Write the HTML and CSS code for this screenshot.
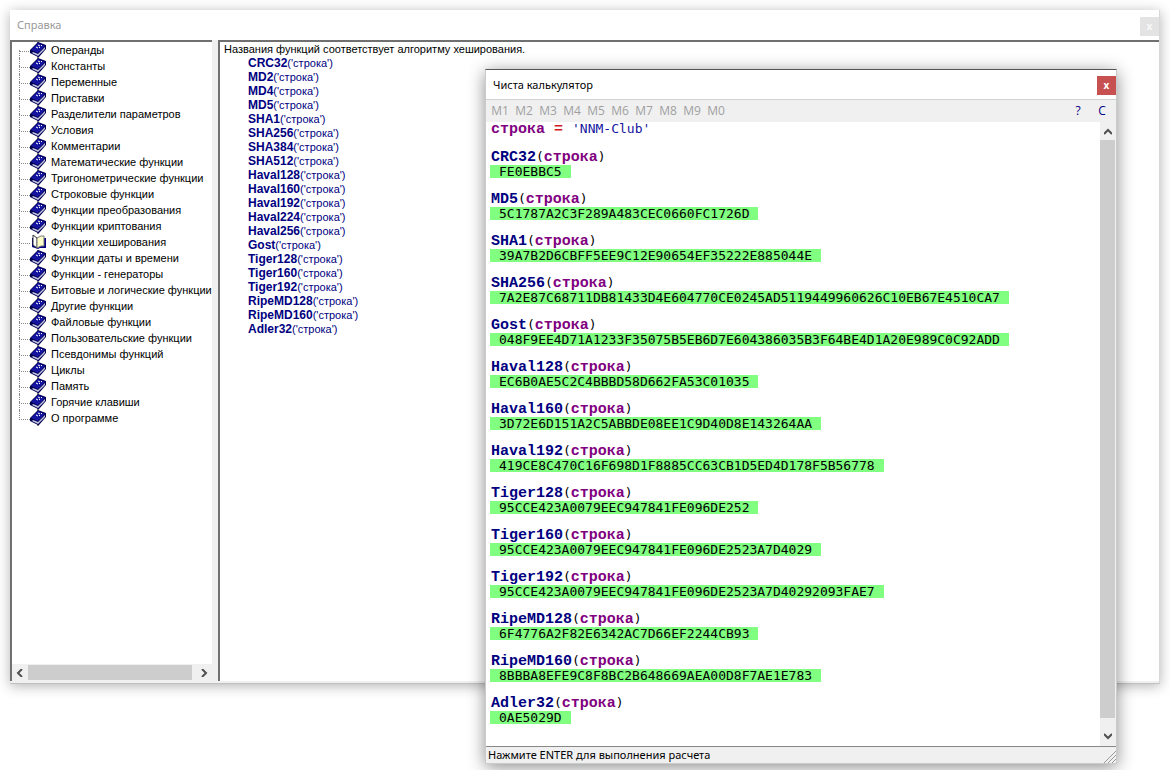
FILE: index.html
```
<!DOCTYPE html>
<html lang="ru">
<head>
    <meta charset="UTF-8">
    <meta name="viewport" content="width=device-width, initial-scale=1.0">
    <title>Чиста калькулятор</title>
    <link rel="stylesheet" href="styles.css">
</head>
<body>

    <svg class="sprites" aria-hidden="true">
        <symbol id="book" viewBox="0 0 16 16">
            <path d="M8 0v2M8 13v3" stroke="#000" />
            <path d="M0 8l8-8 8 3v4l-7 8h-1l-8-4z" fill="#000050" />
            <path d="M1 8l7-7 7 3-7 7z" fill="#1414a0" />
            <path d="M8 12l7-7v2l-7 7-6-3 1-1z" fill="#c4c4e4" />
            <path d="M6 5l2 1M8 3l2 1M9 5l1 1M11 3l1 1" stroke="#fff" fill="none" />
        </symbol>
        <symbol id="book-open" viewBox="0 0 16 16">
            <path d="M0 4h2v9l6 2 2-1h6V4h-2" fill="#000080" />
            <path d="M3 1l4 3v10l-4-3z" fill="#fff" stroke="#333" />
            <path d="M7 4l4-2h3v10h-3l-4 2z" fill="#ffffc8" stroke="#777" />
        </symbol>
    </svg>

    <div class="desktop">
        <section class="window help-window">
            <header class="titlebar">
                <h2>Справка</h2>
                <button class="close-btn" aria-label="Закрыть справку">x</button>
            </header>
            <div class="help-body">
                <nav class="tree-pane">
                    <ul class="tree">
                        <li><a href="#"><svg><use href="#book" /></svg>Операнды</a></li>
                        <li><a href="#"><svg><use href="#book" /></svg>Константы</a></li>
                        <li><a href="#"><svg><use href="#book" /></svg>Переменные</a></li>
                        <li><a href="#"><svg><use href="#book" /></svg>Приставки</a></li>
                        <li><a href="#"><svg><use href="#book" /></svg>Разделители параметров</a></li>
                        <li><a href="#"><svg><use href="#book" /></svg>Условия</a></li>
                        <li><a href="#"><svg><use href="#book" /></svg>Комментарии</a></li>
                        <li><a href="#"><svg><use href="#book" /></svg>Математические функции</a></li>
                        <li><a href="#"><svg><use href="#book" /></svg>Тригонометрические функции</a></li>
                        <li><a href="#"><svg><use href="#book" /></svg>Строковые функции</a></li>
                        <li><a href="#"><svg><use href="#book" /></svg>Функции преобразования</a></li>
                        <li><a href="#"><svg><use href="#book" /></svg>Функции криптования</a></li>
                        <li><a href="#"><svg><use href="#book-open" /></svg>Функции хеширования</a></li>
                        <li><a href="#"><svg><use href="#book" /></svg>Функции даты и времени</a></li>
                        <li><a href="#"><svg><use href="#book" /></svg>Функции - генераторы</a></li>
                        <li><a href="#"><svg><use href="#book" /></svg>Битовые и логические функции</a></li>
                        <li><a href="#"><svg><use href="#book" /></svg>Другие функции</a></li>
                        <li><a href="#"><svg><use href="#book" /></svg>Файловые функции</a></li>
                        <li><a href="#"><svg><use href="#book" /></svg>Пользовательские функции</a></li>
                        <li><a href="#"><svg><use href="#book" /></svg>Псевдонимы функций</a></li>
                        <li><a href="#"><svg><use href="#book" /></svg>Циклы</a></li>
                        <li><a href="#"><svg><use href="#book" /></svg>Память</a></li>
                        <li><a href="#"><svg><use href="#book" /></svg>Горячие клавиши</a></li>
                        <li><a href="#"><svg><use href="#book" /></svg>О программе</a></li>
                    </ul>
                    <div class="hscroll">
                        <button aria-label="Влево"><svg viewBox="0 0 8 8"><path d="M6 0L2 4l4 4" /></svg></button>
                        <div class="hthumb"></div>
                        <button aria-label="Вправо"><svg viewBox="0 0 8 8"><path d="M2 0l4 4-4 4" /></svg></button>
                    </div>
                </nav>
                <article class="topic">
                    <p>Названия функций соответствует алгоритму хеширования.</p>
                    <ul>
                        <li><b>CRC32</b>('строка')</li>
                        <li><b>MD2</b>('строка')</li>
                        <li><b>MD4</b>('строка')</li>
                        <li><b>MD5</b>('строка')</li>
                        <li><b>SHA1</b>('строка')</li>
                        <li><b>SHA256</b>('строка')</li>
                        <li><b>SHA384</b>('строка')</li>
                        <li><b>SHA512</b>('строка')</li>
                        <li><b>Haval128</b>('строка')</li>
                        <li><b>Haval160</b>('строка')</li>
                        <li><b>Haval192</b>('строка')</li>
                        <li><b>Haval224</b>('строка')</li>
                        <li><b>Haval256</b>('строка')</li>
                        <li><b>Gost</b>('строка')</li>
                        <li><b>Tiger128</b>('строка')</li>
                        <li><b>Tiger160</b>('строка')</li>
                        <li><b>Tiger192</b>('строка')</li>
                        <li><b>RipeMD128</b>('строка')</li>
                        <li><b>RipeMD160</b>('строка')</li>
                        <li><b>Adler32</b>('строка')</li>
                    </ul>
                </article>
            </div>
        </section>

        <section class="window calc-window">
            <header class="titlebar">
                <h2>Чиста калькулятор</h2>
                <button class="close-btn" aria-label="Закрыть">x</button>
            </header>
            <div class="toolbar">
                <button disabled>M1</button>
                <button disabled>M2</button>
                <button disabled>M3</button>
                <button disabled>M4</button>
                <button disabled>M5</button>
                <button disabled>M6</button>
                <button disabled>M7</button>
                <button disabled>M8</button>
                <button disabled>M9</button>
                <button disabled>M0</button>
                <button class="tool-help">?</button>
                <button class="tool-clear">C</button>
            </div>
            <div class="calc-body">
                <div class="sheet">
                    <p class="expr"><var>строка</var><b class="op"> = </b><span class="str">'NNM-Club'</span></p>

                    <p class="expr"><b>CRC32</b>(<var>строка</var>)</p>
                    <p class="result"><span>FE0EBBC5</span></p>

                    <p class="expr"><b>MD5</b>(<var>строка</var>)</p>
                    <p class="result"><span>5C1787A2C3F289A483CEC0660FC1726D</span></p>

                    <p class="expr"><b>SHA1</b>(<var>строка</var>)</p>
                    <p class="result"><span>39A7B2D6CBFF5EE9C12E90654EF35222E885044E</span></p>

                    <p class="expr"><b>SHA256</b>(<var>строка</var>)</p>
                    <p class="result"><span>7A2E87C68711DB81433D4E604770CE0245AD5119449960626C10EB67E4510CA7</span></p>

                    <p class="expr"><b>Gost</b>(<var>строка</var>)</p>
                    <p class="result"><span>048F9EE4D71A1233F35075B5EB6D7E604386035B3F64BE4D1A20E989C0C92ADD</span></p>

                    <p class="expr"><b>Haval128</b>(<var>строка</var>)</p>
                    <p class="result"><span>EC6B0AE5C2C4BBBD58D662FA53C01035</span></p>

                    <p class="expr"><b>Haval160</b>(<var>строка</var>)</p>
                    <p class="result"><span>3D72E6D151A2C5ABBDE08EE1C9D40D8E143264AA</span></p>

                    <p class="expr"><b>Haval192</b>(<var>строка</var>)</p>
                    <p class="result"><span>419CE8C470C16F698D1F8885CC63CB1D5ED4D178F5B56778</span></p>

                    <p class="expr"><b>Tiger128</b>(<var>строка</var>)</p>
                    <p class="result"><span>95CCE423A0079EEC947841FE096DE252</span></p>

                    <p class="expr"><b>Tiger160</b>(<var>строка</var>)</p>
                    <p class="result"><span>95CCE423A0079EEC947841FE096DE2523A7D4029</span></p>

                    <p class="expr"><b>Tiger192</b>(<var>строка</var>)</p>
                    <p class="result"><span>95CCE423A0079EEC947841FE096DE2523A7D40292093FAE7</span></p>

                    <p class="expr"><b>RipeMD128</b>(<var>строка</var>)</p>
                    <p class="result"><span>6F4776A2F82E6342AC7D66EF2244CB93</span></p>

                    <p class="expr"><b>RipeMD160</b>(<var>строка</var>)</p>
                    <p class="result"><span>8BBBA8EFE9C8F8BC2B648669AEA00D8F7AE1E783</span></p>

                    <p class="expr"><b>Adler32</b>(<var>строка</var>)</p>
                    <p class="result"><span>0AE5029D</span></p>
                </div>
                <div class="vscroll">
                    <button aria-label="Вверх"><svg viewBox="0 0 8 8"><path d="M0 6l4-4 4 4" /></svg></button>
                    <div class="vthumb"></div>
                    <button aria-label="Вниз"><svg viewBox="0 0 8 8"><path d="M0 2l4 4 4-4" /></svg></button>
                </div>
            </div>
            <footer class="statusbar">
                <span>Нажмите ENTER для выполнения расчета</span>
                <svg class="grip" viewBox="0 0 12 12"><path d="M0 12L12 0M4 12l8-8M8 12l4-4" /></svg>
            </footer>
        </section>
    </div>

</body>
</html>
```
FILE: styles.css
```
* {
    box-sizing: border-box;
}

body {
    margin: 0;
    background-color: #fff;
    font-family: "Liberation Sans", Arial, sans-serif;
    font-size: 11px;
    color: #000;
}

h2, p, ul {
    margin: 0;
    padding: 0;
}

ul {
    list-style: none;
}

button {
    padding: 0;
    border: none;
    background: none;
    font-family: inherit;
}

.sprites {
    display: none;
}

.desktop {
    position: relative;
    height: 100vh;
    min-height: 770px;
    overflow: hidden;
}

/* Windows */
.window {
    position: absolute;
    display: flex;
    flex-direction: column;
    background-color: #fff;
}

.help-window {
    top: 10px;
    right: 10px;
    bottom: 86px;
    left: 10px;
    border-right: 1px solid #d8d8d8;
    border-bottom: 1px solid #c0c0c0;
    box-shadow: 0 2px 12px rgba(0, 0, 0, 0.3);
}

.calc-window {
    top: 69px;
    right: 53px;
    bottom: 6px;
    left: 485px;
    border: 1px solid #c8cccc;
    border-top-color: #555;
    box-shadow: 0 3px 16px rgba(0, 0, 0, 0.45);
}

.titlebar {
    display: flex;
    flex: none;
    justify-content: space-between;
    align-items: center;
    height: 30px;
    padding-left: 7px;
    font-family: "Noto Sans", sans-serif;
}

.titlebar h2 {
    font-size: 11px;
    font-weight: normal;
    line-height: 16px;
}

.calc-window .titlebar {
    height: 29px;
}

.help-window .titlebar {
    color: #999;
}

.close-btn {
    width: 19px;
    height: 19px;
    margin-top: 2px;
    background-color: #c75050;
    color: #fff;
    font-size: 10px;
    font-weight: bold;
    line-height: 17px;
}

.help-window .close-btn {
    background-color: #e3e3e3;
    color: #f8f8f8;
}

/* Help window */
.help-body {
    display: flex;
    flex: 1;
    gap: 6px;
    min-height: 0;
    padding-bottom: 2px;
    background-color: #f0f0f0;
}

.tree-pane {
    display: flex;
    flex: none;
    flex-direction: column;
    width: 202px;
    border-top: 2px solid #707070;
    border-left: 2px solid #707070;
    background-color: #fff;
    overflow: hidden;
}

.tree {
    flex: 1;
    padding-left: 7px;
}

.tree li {
    position: relative;
    height: 16px;
    padding-left: 11px;
    white-space: nowrap;
}

/* dotted branch lines */
.tree li::before {
    content: "";
    position: absolute;
    top: 0;
    left: 0;
    width: 10px;
    height: 9px;
    border-left: 1px dotted #888;
    border-bottom: 1px dotted #888;
}

.tree li:first-child::before {
    border-left: none;
}

.tree li:not(:last-child)::after {
    content: "";
    position: absolute;
    top: 8px;
    left: 0;
    height: 8px;
    border-left: 1px dotted #888;
}

.tree a {
    display: flex;
    align-items: center;
    gap: 5px;
    height: 16px;
    color: #000;
    text-decoration: none;
}

.tree svg {
    flex: none;
    width: 16px;
    height: 16px;
}

.hscroll {
    display: flex;
    height: 17px;
    background-color: #f0f0f0;
}

.hscroll button {
    width: 16px;
}

.hthumb {
    flex: 1;
    margin: 1px 4px 1px 0;
    background-color: #cdcdcd;
}

.hscroll svg,
.vscroll svg {
    width: 8px;
    height: 8px;
    fill: none;
    stroke: #505050;
    stroke-width: 2;
}

.topic {
    flex: 1;
    padding-left: 4px;
    border-top: 2px solid #707070;
    border-left: 2px solid #707070;
    background-color: #fff;
    line-height: 14px;
}

.topic ul {
    padding-left: 24px;
    color: #000080;
}

.topic li {
    height: 14px;
}

.topic b {
    font-size: 12px;
}

/* Calculator window */
.toolbar {
    display: flex;
    flex: none;
    height: 23px;
    padding: 0 2px 1px;
    border-top: 1px solid #d0d4d0;
    background-color: #f0f0f0;
    font-family: "Open Sans", sans-serif;
}

.toolbar button {
    width: 24px;
    font-size: 12px;
    color: #000080;
}

.toolbar button:disabled {
    color: #a0a0a0;
}

.toolbar .tool-help {
    margin-left: auto;
}

.calc-body {
    display: flex;
    flex: 1;
    min-height: 0;
}

.sheet {
    flex: 1;
    padding-left: 5px;
    overflow: hidden;
    font-family: "DejaVu Sans Mono", monospace;
    font-size: 13px;
    line-height: 14px;
    white-space: nowrap;
}

.expr {
    height: 14px;
    margin-bottom: 14px;
}

.expr b,
.expr var {
    font-family: "Liberation Mono", monospace;
    font-size: 15px;
    font-style: normal;
    font-weight: bold;
    line-height: 12px;
    color: #000080;
}

.expr var {
    color: #800080;
}

.expr .op {
    color: #d02020;
}

.expr .str {
    color: #1414a0;
}

.expr:has(+ .result) {
    margin-bottom: 0;
}

.result {
    height: 14px;
    margin-bottom: 14px;
    padding-top: 1px;
}

.result span {
    display: block;
    width: fit-content;
    height: 13px;
    margin-left: -1px;
    padding: 0 9px;
    background-color: #80ff80;
    line-height: 13px;
}

.vscroll {
    display: flex;
    flex-direction: column;
    width: 16px;
    padding: 0 1px 2px 0;
    background-color: #f0f0f0;
}

.vscroll button {
    height: 18px;
}

.vthumb {
    flex: 1;
    margin-bottom: 8px;
    background-color: #cdcdcd;
}

.statusbar {
    display: flex;
    flex: none;
    justify-content: space-between;
    align-items: center;
    height: 17px;
    padding-left: 2px;
    border-top: 1px solid #888;
    background-color: #f0f0f0;
    font-family: "Noto Sans", sans-serif;
    font-size: 11px;
    line-height: 16px;
}

.grip {
    align-self: flex-end;
    width: 12px;
    height: 12px;
    stroke: #999;
}
```
